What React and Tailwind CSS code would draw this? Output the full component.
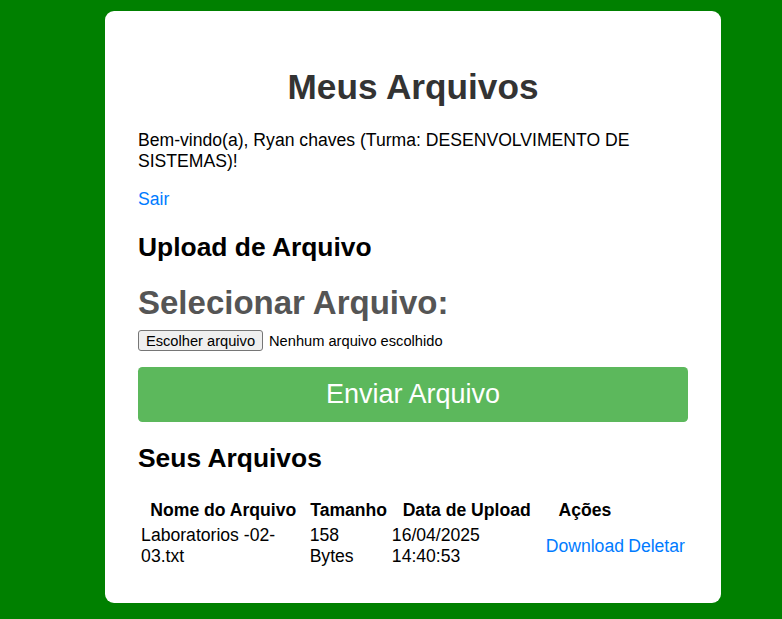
const files = [
    {
        name: 'Laboratorios -02-03.txt',
        size: '158 Bytes',
        uploadedAt: '16/04/2025 14:40:53',
    },
];

const App = () => {
    return (
        <div className="min-h-[619px] bg-[#008000] pt-[11px] pb-[16px] font-['Liberation_Sans',Arial,sans-serif] leading-[normal]">
            <div className="ml-[105px] w-[616px] rounded-[9px] bg-white p-[33px] text-black">
                <h1 className="mt-[22.5px] mb-[23px] text-center text-[35.2px] font-bold text-[#333]">Meus Arquivos</h1>

                <p className="mb-[17.6px] text-[17.6px]">
                    Bem-vindo(a), Ryan chaves (Turma: DESENVOLVIMENTO DE SISTEMAS)!
                </p>
                <p className="text-[17.6px]">
                    <a href="#" className="text-[#007bff]">Sair</a>
                </p>

                <h2 className="mt-[22px] mb-[21px] text-[26.4px] font-bold">Upload de Arquivo</h2>

                <form onSubmit={(e) => e.preventDefault()}>
                    <label className="block text-[33px] font-bold text-[#555]">Selecionar Arquivo:</label>
                    <div className="mt-[8px] flex items-center gap-[6px] text-[14.67px]">
                        <span className="flex h-[21.4px] w-[125px] items-center justify-center rounded-[3px] border border-[#767676] bg-[#efefef] text-black">
                            Escolher arquivo
                        </span>
                        <span>Nenhum arquivo escolhido</span>
                    </div>
                    <button
                        type="submit"
                        className="mt-[16px] flex h-[55px] w-full items-center justify-center rounded-[4.4px] bg-[#5cb85c] text-[27px] text-white"
                    >
                        Enviar Arquivo
                    </button>
                </form>

                <h2 className="mt-[21px] mb-[22.4px] text-[26.4px] font-bold">Seus Arquivos</h2>

                <table className="w-full border-separate border-spacing-[2.2px] text-[17.6px]">
                    <thead>
                        <tr>
                            <th className="p-[1.1px] text-center font-bold">Nome do Arquivo</th>
                            <th className="p-[1.1px] text-center font-bold">Tamanho</th>
                            <th className="p-[1.1px] text-center font-bold">Data de Upload</th>
                            <th className="p-[1.1px] text-center font-bold">Ações</th>
                        </tr>
                    </thead>
                    <tbody>
                        {files.map((file) => (
                            <tr key={file.name}>
                                <td className="p-[1.1px] align-middle">{file.name}</td>
                                <td className="p-[1.1px] align-middle">{file.size}</td>
                                <td className="p-[1.1px] align-middle">{file.uploadedAt}</td>
                                <td className="p-[1.1px] align-middle">
                                    <a href="#" className="text-[#007bff]">Download</a>
                                </td>
                                <td className="p-[1.1px] align-middle">
                                    <a href="#" className="text-[#007bff]">Deletar</a>
                                </td>
                            </tr>
                        ))}
                    </tbody>
                </table>
            </div>
        </div>
    );
};

export default App;
